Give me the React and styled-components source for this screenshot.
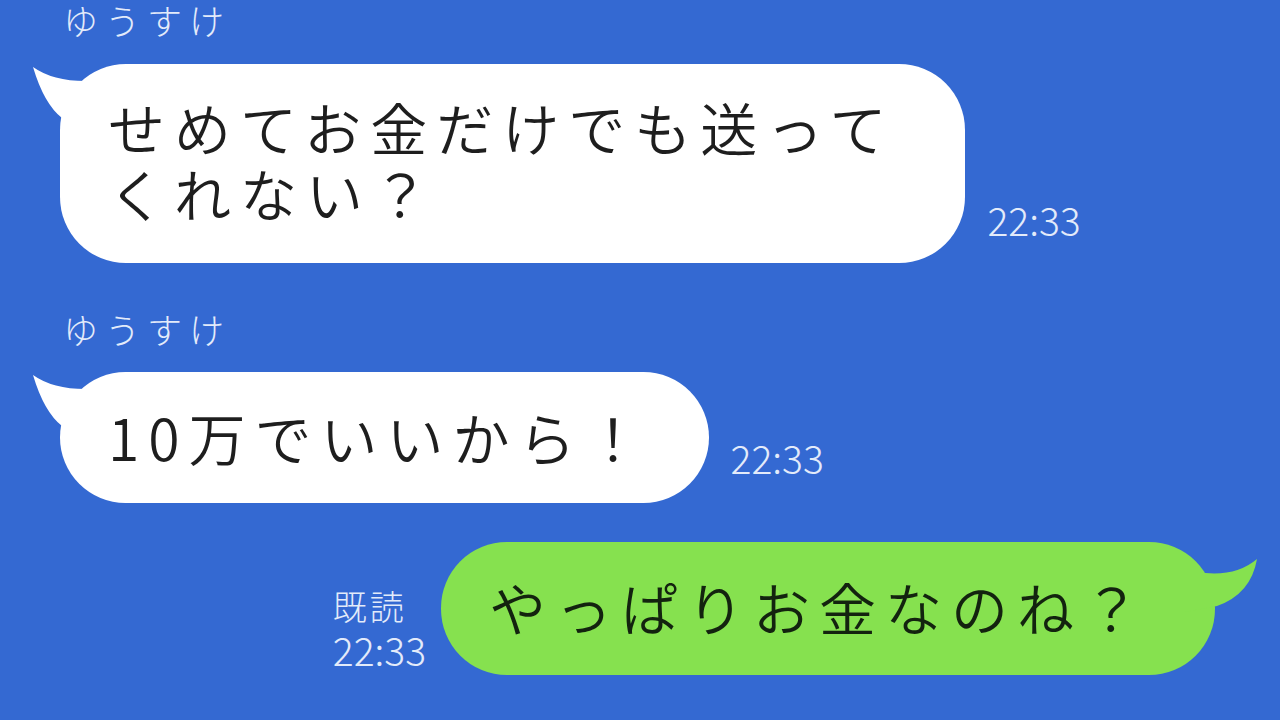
import React from "react";
import styled, { createGlobalStyle, css } from "styled-components";

const Global = createGlobalStyle`
  html, body { margin: 0; padding: 0; background: #3469d2; }
  body { overflow: hidden; }
  #root { width: 1280px; height: 720px; }
`;

const Screen = styled.div`
  width: 1280px;
  height: 720px;
  background: #3469d2;
  box-sizing: border-box;
  padding: 0 65px 0 60px;
  display: flex;
  flex-direction: column;
  font-family: "Noto Sans CJK JP", "Noto Sans", sans-serif;
  overflow: hidden;
`;

const Incoming = styled.section`
  display: flex;
  flex-direction: column;
  align-items: flex-start;
  margin-top: ${(p) => p.$top}px;
`;

const Name = styled.div`
  color: #e3ebfa;
  font-size: 35px;
  line-height: 40px;
  letter-spacing: 7px;
  font-weight: 300;
  padding-left: 3px;
  margin-bottom: ${(p) => p.$gap}px;
`;

const Row = styled.div`
  display: flex;
  align-items: flex-end;
  gap: ${(p) => p.$gap}px;
  justify-content: ${(p) => (p.$out ? "flex-end" : "flex-start")};
`;

const OutRow = styled(Row)`
  margin-top: ${(p) => p.$top}px;
`;

const Bubble = styled.div`
  position: relative;
  box-sizing: border-box;
  border-radius: 66px;
  font-size: 57px;
  font-weight: 350;
  line-height: 66px;
  letter-spacing: 9px;
  white-space: nowrap;
  ${(p) =>
    p.$out
      ? css`
          background: #86e14f;
          color: #13230f;
        `
      : css`
          background: #ffffff;
          color: #1e1e1e;
        `}
  padding: ${(p) => p.$pad};
`;

const Tail = styled.svg`
  position: absolute;
  top: 0;
  overflow: visible;
  ${(p) => (p.$out ? "right: 0;" : "left: 0;")}
`;

const Meta = styled.div`
  display: flex;
  flex-direction: column;
  color: #e3ebfa;
  font-weight: 300;
  margin-bottom: ${(p) => p.$bottom}px;
`;

const Read = styled.span`
  font-size: 34px;
  line-height: 42px;
  letter-spacing: 3px;
`;

const Time = styled.span`
  font-size: 39px;
  line-height: 44px;
`;

function InTail() {
  return (
    <Tail $out={false} width="40" height="60" viewBox="0 0 40 60">
      <path
        d="M -27 3 Q -6 18 30 17 L 30 60 L 2 54 Q -16 40 -27 3 Z"
        fill="#ffffff"
      />
    </Tail>
  );
}

function OutTail() {
  return (
    <Tail $out width="40" height="70" viewBox="-40 0 40 70">
      <path
        d="M 42 17 Q 22 34 -10 31 L -30 31 L -30 70 L 2 64 Q 36 52 42 17 Z"
        fill="#86e14f"
      />
    </Tail>
  );
}

export default function App() {
  return (
    <>
      <Global />
      <Screen>
        <Incoming $top={0}>
          <Name $gap={24}>ゆうすけ</Name>
          <Row $gap={22}>
            <Bubble $pad="29px 70px 38px 48px">
              <InTail />
              せめてお金だけでも送って
              <br />
              くれない？
            </Bubble>
            <Meta $bottom={22}>
              <Time>22:33</Time>
            </Meta>
          </Row>
        </Incoming>
        <Incoming $top={46}>
          <Name $gap={23}>ゆうすけ</Name>
          <Row $gap={22}>
            <Bubble $pad="31px 58px 34px 48px">
              <InTail />
              10万でいいから！
            </Bubble>
            <Meta $bottom={24}>
              <Time>22:33</Time>
            </Meta>
          </Row>
        </Incoming>
        <OutRow $out $top={39} $gap={15}>
          <Meta $bottom={4}>
            <Read>既読</Read>
            <Time>22:33</Time>
          </Meta>
          <Bubble $out $pad="31px 66px 36px 48px">
            <OutTail />
            やっぱりお金なのね？
          </Bubble>
        </OutRow>
      </Screen>
    </>
  );
}
